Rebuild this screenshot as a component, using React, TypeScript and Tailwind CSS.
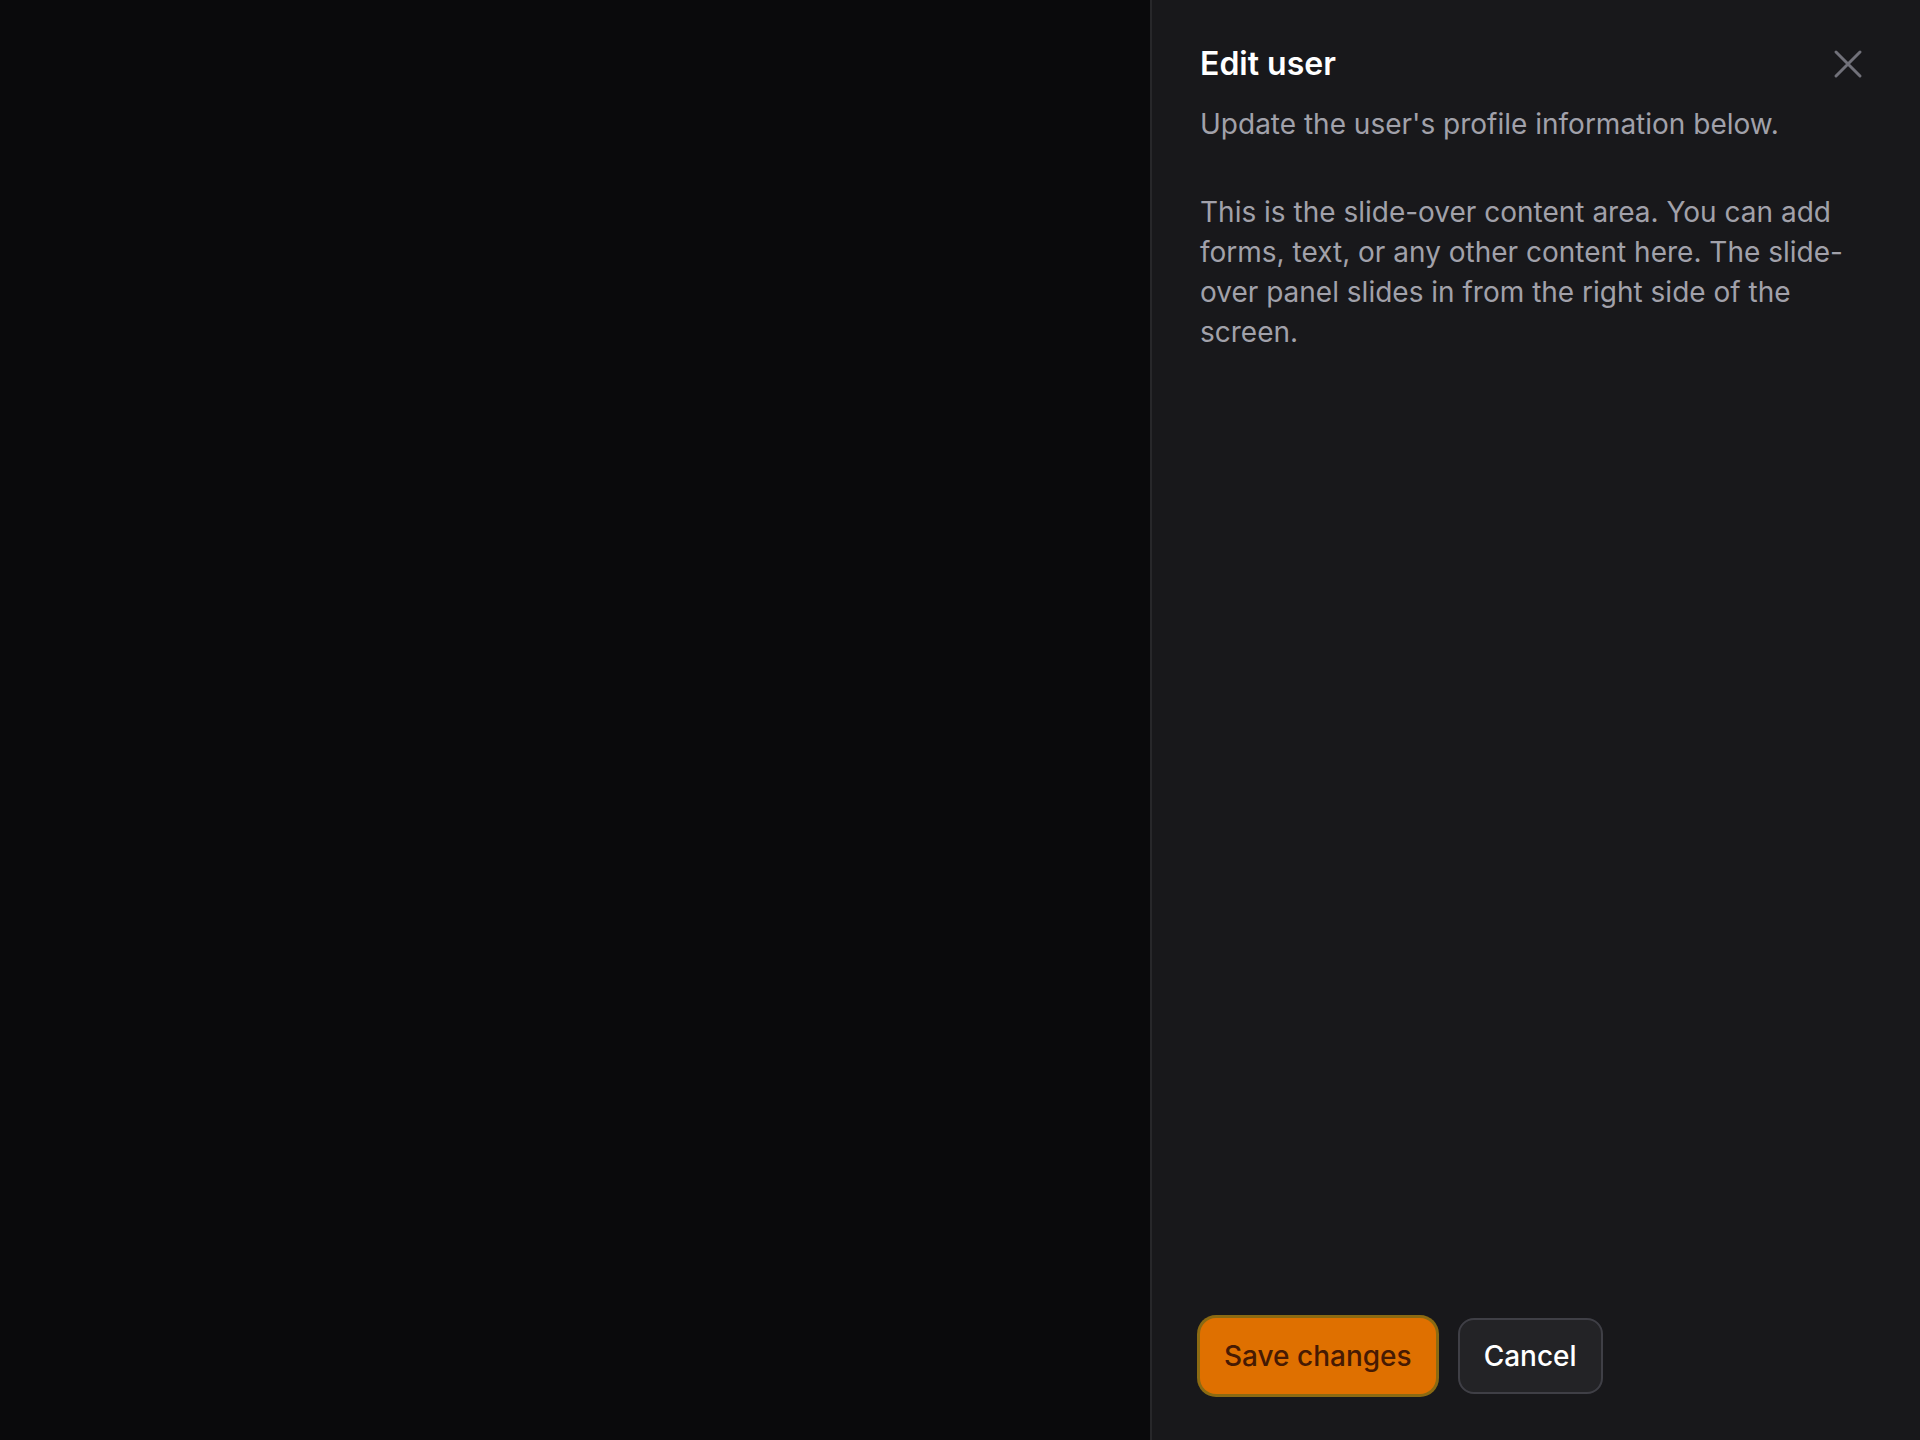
import React from "react";

export default function App() {
  return (
    <div
      className="flex h-[1440px] w-full bg-[#0a0a0c]"
      style={{ fontFamily: "Inter, 'Noto Sans', sans-serif" }}
    >
      <div className="flex-1" />
      <div className="flex w-[770px] flex-col border-l-2 border-[#27272a] bg-[#18181b]">
        <div className="px-12 pt-[40px]">
          <div className="flex items-start justify-between">
            <h2 className="text-[32px] leading-[48px] font-semibold text-white">Edit user</h2>
            <button className="flex h-12 w-12 items-center justify-center text-[#71717a]">
              <svg
                viewBox="0 0 24 24"
                fill="none"
                stroke="currentColor"
                strokeWidth={1.5}
                strokeLinecap="round"
                strokeLinejoin="round"
                className="h-12 w-12"
              >
                <path d="M6 18 18 6M6 6l12 12" />
              </svg>
            </button>
          </div>
          <p className="mt-4 text-[28px] leading-[40px] text-[#a1a1aa]">
            Update the user's profile information below.
          </p>
        </div>
        <div className="flex-1 px-12 pt-12">
          <p className="text-[28px] leading-[40px] text-[#a1a1aa]">
            This is the slide-over content area. You can add forms, text, or any other content here. The slide-over panel slides in from the right side of the screen.
          </p>
        </div>
        <div className="flex items-center gap-[22px] px-12 pb-[46px]">
          <button className="rounded-2xl border-2 border-transparent bg-[#df7000] px-[22px] py-4 text-[28px] leading-[40px] font-medium text-[#461a03] shadow-[0_0_0_3px_#8b6a12]">
            Save changes
          </button>
          <button className="rounded-2xl border-2 border-[#3f3f46] bg-[#232326] px-6 py-4 text-[28px] leading-[40px] font-medium text-white">
            Cancel
          </button>
        </div>
      </div>
    </div>
  );
}
